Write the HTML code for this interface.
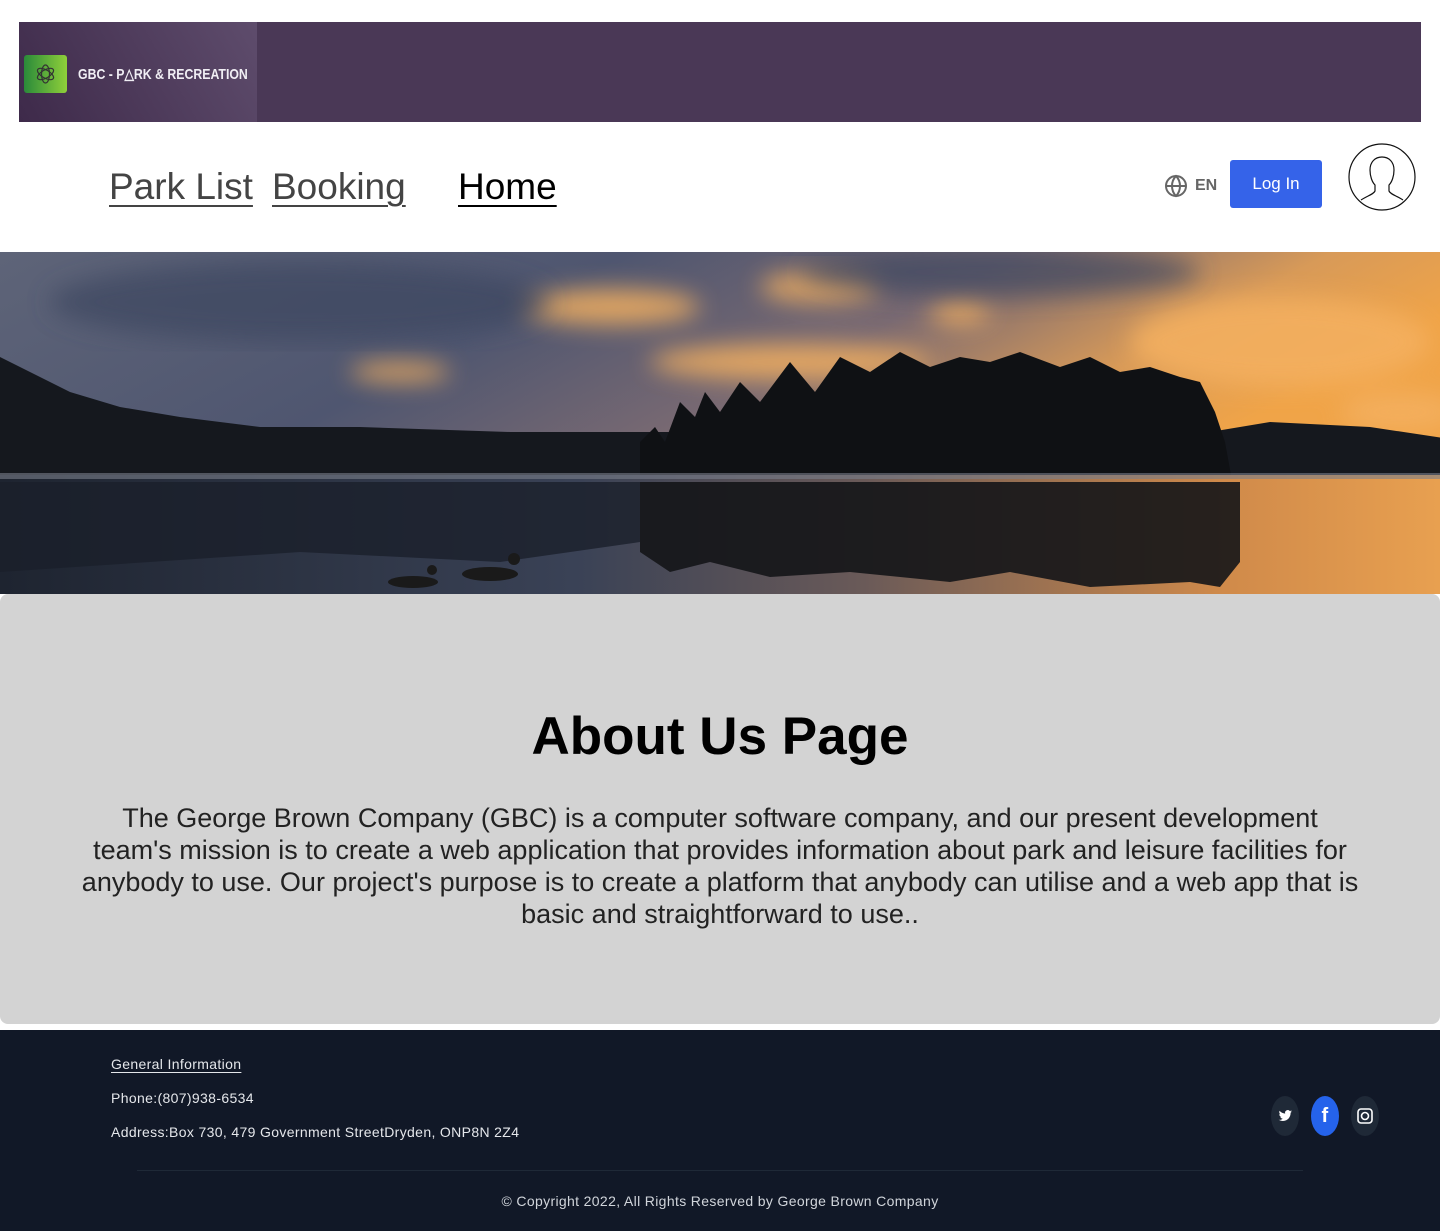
<!DOCTYPE html>
<html><head><meta charset="utf-8">
<style>
*{margin:0;padding:0;box-sizing:border-box}
body{width:1440px;height:1231px;background:#fff;font-family:"Liberation Sans",sans-serif;position:relative;overflow:hidden}
.top{position:absolute;left:19px;top:22px;width:1402px;height:100px;background:#4a3856}
.logo{position:absolute;left:0;top:0;width:238px;height:100px;background:linear-gradient(60deg,#3e2a4a,#5e4c6c)}
.lg{position:absolute;left:5px;top:33px;width:43px;height:38px;border-radius:3px;background:linear-gradient(90deg,#2a8a3a,#8fd03a)}
.lt{position:absolute;left:59px;top:43px;color:#f0eef4;font:bold 15px "Liberation Sans Narrow","Liberation Sans",sans-serif;white-space:nowrap;transform:scaleX(.82);transform-origin:left}
.nav a{position:absolute;top:166px;font-size:37px;color:#444;text-decoration:underline;text-decoration-thickness:2px;text-underline-offset:6px;white-space:nowrap}
.en{position:absolute;top:177px;color:#666;font-weight:bold;font-size:16px}
.btn{position:absolute;left:1230px;top:160px;width:92px;height:48px;background:#3563e9;border-radius:3px;color:#fff;font-size:17px;text-align:center;line-height:48px}
.hero{position:absolute;left:0;top:252px;width:1440px;height:342px}
.box{position:absolute;left:0;top:594px;width:1440px;height:430px;background:#d3d3d3;border-radius:8px;text-align:center}
.box h1{position:absolute;top:112px;width:100%;font-size:53px;font-weight:bold;color:#000}
.box p{position:absolute;left:0;right:0;top:208px;font-size:27px;line-height:32px;color:#222;white-space:nowrap}
.foot{position:absolute;left:0;top:1030px;width:1440px;height:201px;background:#111827;color:#e5e7eb;font-size:14px;letter-spacing:.35px}
.foot div{position:absolute;left:111px;white-space:nowrap}
.soc{position:absolute;top:66px;width:28px;height:40px;border-radius:50%;background:#1f2937}
</style></head><body>
<div class="top"><div class="logo"><div class="lg"><svg width="43" height="38" viewBox="0 0 43 38"><g fill="none" stroke="#333" stroke-width="1.2"><ellipse cx="21.5" cy="19" rx="4" ry="9"/><ellipse cx="21.5" cy="19" rx="4" ry="9" transform="rotate(60 21.5 19)"/><ellipse cx="21.5" cy="19" rx="4" ry="9" transform="rotate(120 21.5 19)"/></g></svg></div><div class="lt">GBC - P&#9651;RK &amp; RECREATION</div></div></div>
<div class="nav"><a style="left:109px">Park List</a><a style="left:272px">Booking</a><a style="left:458px;color:#000">Home</a></div>
<svg style="position:absolute;left:1164px;top:174px" width="24" height="24" viewBox="0 0 24 24" fill="none" stroke="#666" stroke-width="2"><circle cx="12" cy="12" r="10"/><path d="M2 12h20M12 2c3 3 4 7 4 10s-1 7-4 10c-3-3-4-7-4-10s1-7 4-10z"/></svg>
<div class="en" style="left:1195px">EN</div>
<div class="btn">Log In</div>
<svg style="position:absolute;left:1348px;top:143px" width="68" height="68" viewBox="0 0 68 68" fill="none" stroke="#111" stroke-width="1.2"><circle cx="34" cy="34" r="33"/><path d="M13 57c6-4 13-6 14-9v-6c-3-3-5-9-5-15 0-8 5-13 12-13s12 5 12 13c0 6-2 12-5 15v6c1 3 8 5 14 9"/></svg>
<svg class="hero" viewBox="0 0 1440 342" preserveAspectRatio="none">
<defs>
<linearGradient id="sky" x1="0" y1="0" x2="1" y2="0.3"><stop offset="0" stop-color="#5e6478"/><stop offset=".4" stop-color="#4f5670"/><stop offset=".65" stop-color="#7a6a72"/><stop offset=".85" stop-color="#d89a58"/><stop offset="1" stop-color="#f0a448"/></linearGradient>
<linearGradient id="wat" x1="0" y1="0" x2="1" y2="0"><stop offset="0" stop-color="#1e2430"/><stop offset=".4" stop-color="#3a4256"/><stop offset=".6" stop-color="#6a5a58"/><stop offset=".85" stop-color="#d08a4a"/><stop offset="1" stop-color="#e8a050"/></linearGradient>
<filter id="b"><feGaussianBlur stdDeviation="12"/></filter>
</defs>
<rect width="1440" height="230" fill="url(#sky)"/>
<g filter="url(#b)" fill="#f4b060" opacity=".85"><ellipse cx="790" cy="110" rx="140" ry="18"/><ellipse cx="610" cy="55" rx="90" ry="18"/><ellipse cx="820" cy="35" rx="60" ry="15"/><ellipse cx="1280" cy="90" rx="150" ry="45"/><ellipse cx="400" cy="120" rx="50" ry="10"/><ellipse cx="960" cy="60" rx="30" ry="12"/><ellipse cx="1400" cy="160" rx="60" ry="20"/></g>
<g filter="url(#b)" fill="#3e4660" opacity=".7"><ellipse cx="300" cy="50" rx="250" ry="40"/><ellipse cx="1000" cy="20" rx="200" ry="25"/></g>
<rect y="221" width="1440" height="121" fill="url(#wat)"/>
<path d="M0 223V105l30 15 40 20 50 15 60 10 80 10 100 0 150 5 100 0 600 0 60-10 100 5 80 12V223z" fill="#15181e"/>
<path d="M640 223L640 190 655 175 665 190 680 150 695 165 705 140 720 160 740 130 760 150 790 110 815 140 840 105 870 120 900 100 930 115 960 105 990 110 1020 100 1060 115 1090 105 1120 120 1150 115 1180 125 1200 130 1215 160 1225 190 1231 223z" fill="#0f1114"/>
<path d="M0 221h1440v6H0z" fill="#7a7e8a" opacity=".6"/>
<path d="M640 230V300l30 20 40-10 60 15 80-5 100 10 60-10 80 15 100-5 30 5 20-25V230z" fill="#141518" opacity=".9"/>
<path d="M0 230h640v60L500 310 300 300 0 320z" fill="#1a1f2b" opacity=".8"/>
<g fill="#1a1a1a"><ellipse cx="413" cy="330" rx="25" ry="6"/><circle cx="432" cy="318" r="5"/><ellipse cx="490" cy="322" rx="28" ry="7"/><circle cx="514" cy="307" r="6"/></g>
</svg>
<div class="box"><h1>About Us Page</h1><p>The George Brown Company (GBC) is a computer software company, and our present development<br>team's mission is to create a web application that provides information about park and leisure facilities for<br>anybody to use. Our project's purpose is to create a platform that anybody can utilise and a web app that is<br>basic and straightforward to use..</p></div>
<div class="foot">
<div style="top:26px;text-decoration:underline;text-underline-offset:3px">General Information</div>
<div style="top:60px">Phone:(807)938-6534</div>
<div style="top:94px">Address:Box 730, 479 Government StreetDryden, ONP8N 2Z4</div>
<div style="left:137px;top:140px;width:1166px;height:1px;background:#1f2937"></div>
<div style="left:0;width:1440px;top:163px;text-align:center;color:#d1d5db">© Copyright 2022, All Rights Reserved by George Brown Company</div>
<span class="soc" style="left:1271px"><svg width="28" height="40" viewBox="0 0 28 40"><path fill="#fff" d="M21 15.5c-.5.2-1 .4-1.6.4.6-.3 1-.9 1.2-1.5-.5.3-1.1.5-1.7.7a2.7 2.7 0 0 0-4.7 2.5c-2.3-.1-4.3-1.2-5.6-2.8-.7 1.3-.3 2.8.8 3.6-.4 0-.9-.1-1.2-.3 0 1.3.9 2.5 2.2 2.7-.4.1-.8.1-1.2 0 .4 1.1 1.4 1.9 2.5 1.9-1.1.9-2.5 1.3-4 1.1 1.2.8 2.7 1.2 4.2 1.2 5 0 7.9-4.3 7.7-8.2.5-.4 1-.9 1.4-1.3z"/></svg></span>
<span class="soc" style="left:1311px;background:#2563eb;color:#fff;text-align:center;line-height:40px;font-weight:bold;font-size:20px">f</span>
<span class="soc" style="left:1351px"><svg width="28" height="40" viewBox="0 0 28 40" fill="none" stroke="#fff" stroke-width="1.6"><rect x="7" y="13" width="14" height="14" rx="3"/><circle cx="14" cy="20" r="3.5"/></svg></span>
</div>
</body></html>
